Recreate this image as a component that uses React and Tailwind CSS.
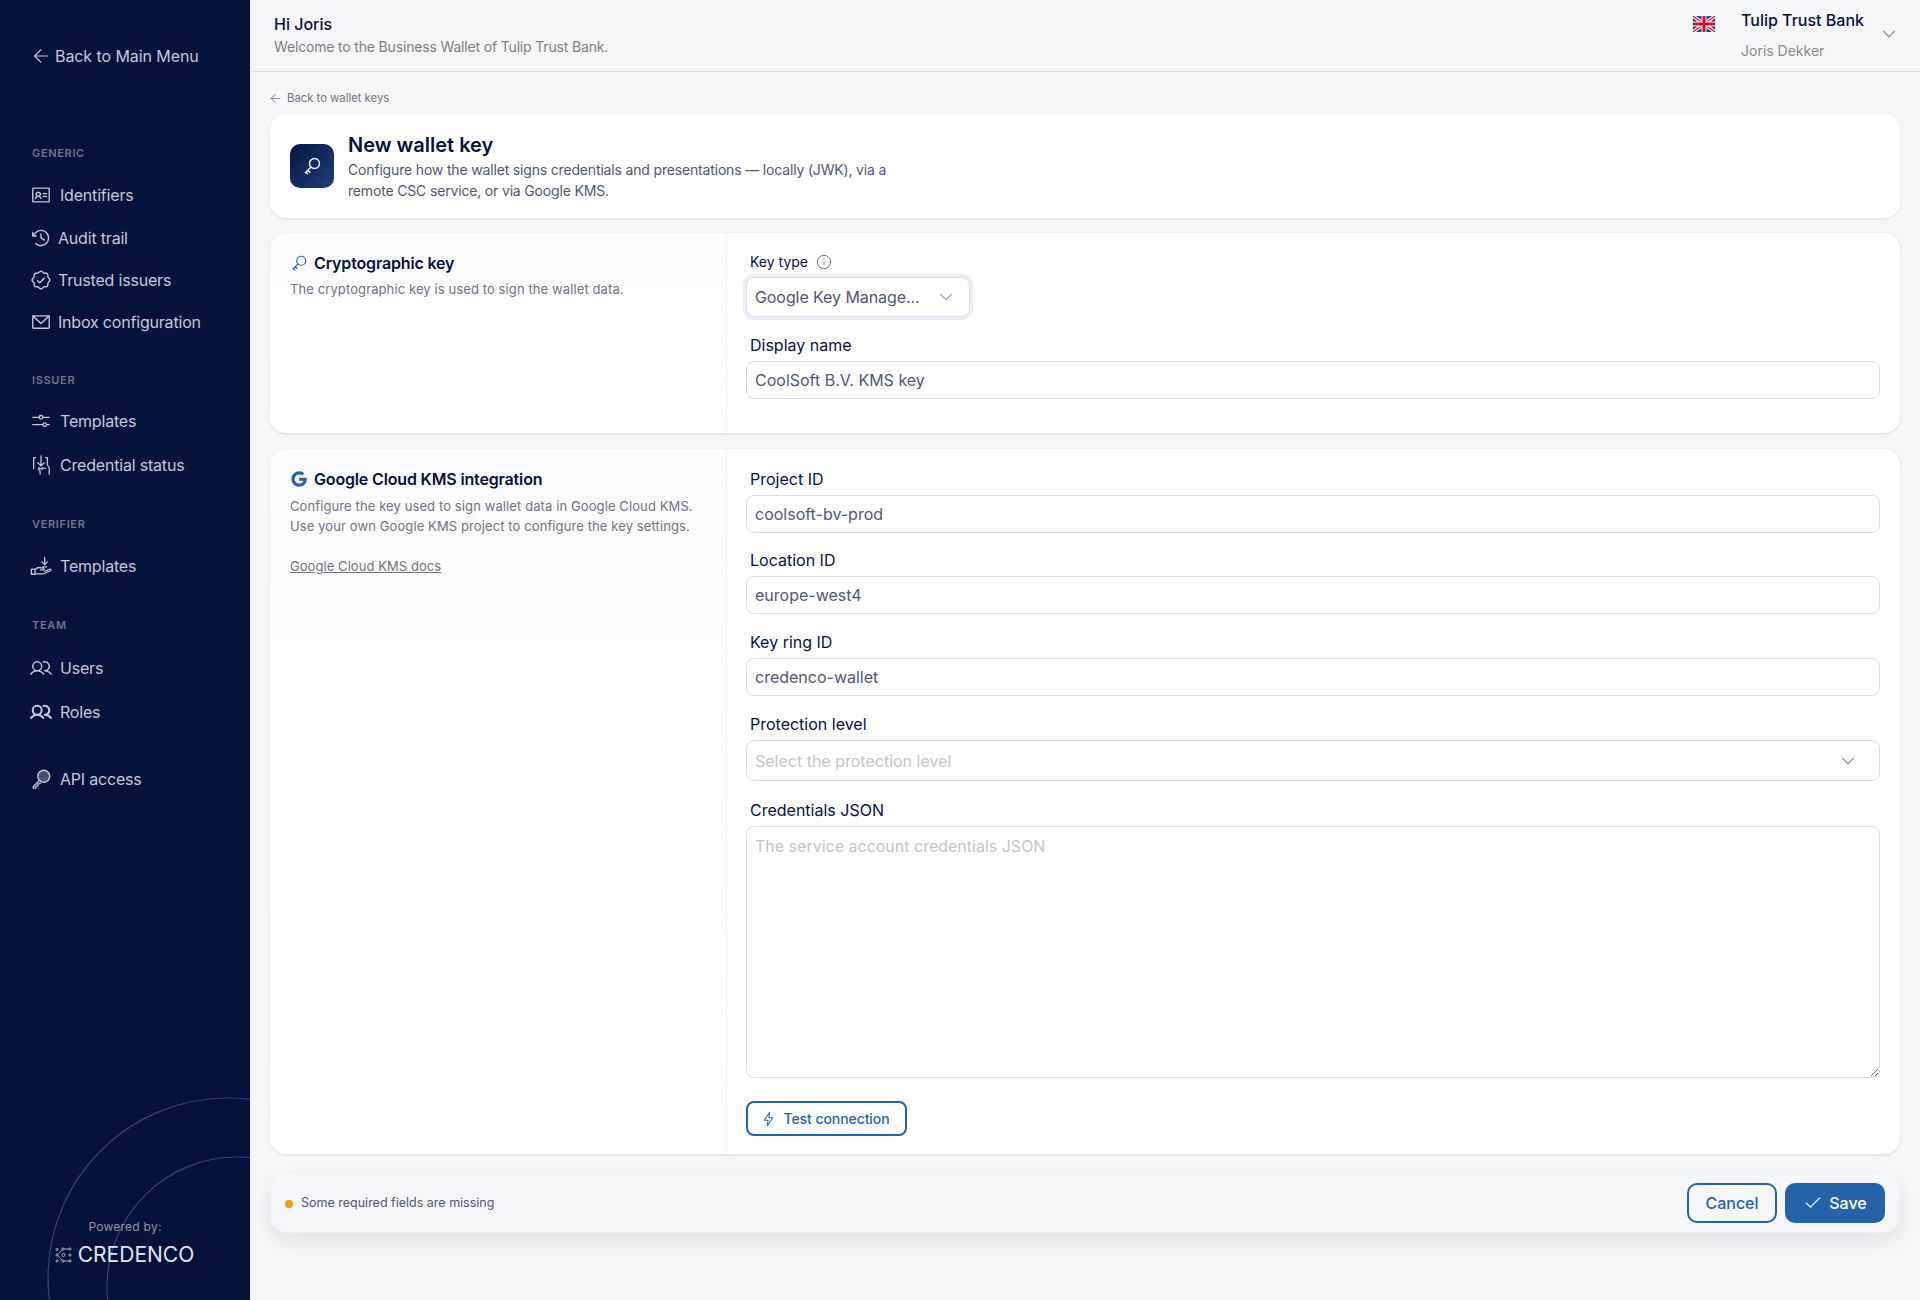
import { ArrowLeft, ChevronDown, Check, Info } from "lucide-react";
import {
  PiIdentificationCard,
  PiClockCounterClockwise,
  PiSealCheck,
  PiEnvelopeSimple,
  PiUsers,
  PiUsersBold,
} from "react-icons/pi";

const font = "font-['Inter','Liberation_Sans',sans-serif]";

function KeyGlyph({ className }) {
  return (
    <svg viewBox="0 0 24 24" fill="none" stroke="currentColor" strokeWidth="1.6" strokeLinecap="round" className={className}>
      <circle cx="15" cy="9" r="6" />
      <path d="M10.8 13.2 4 20M7 17l2.5 2.5M4.6 19.4l2 2" />
    </svg>
  );
}

function SlidersIcon({ className }) {
  return (
    <svg viewBox="0 0 24 24" fill="none" stroke="currentColor" strokeWidth="1.4" strokeLinecap="round" className={className}>
      <path d="M3 8h7M14 8h7M3 16h11M18 16h3" />
      <circle cx="12" cy="8" r="2" />
      <circle cx="16" cy="16" r="2" />
    </svg>
  );
}

function CredentialStatusIcon({ className }) {
  return (
    <svg viewBox="0 0 24 24" fill="none" stroke="currentColor" strokeWidth="1.4" strokeLinecap="round" strokeLinejoin="round" className={className}>
      <path d="M4 16V4h2M12 2v11M8.500 9.500 12 13l3.500-3.500" />
      <path d="M17 4h2v8l2 3v7M11 22v-3l-2-3 1-1 3 2 1-2 3 1" />
    </svg>
  );
}

function HandIcon({ className }) {
  return (
    <svg viewBox="0 0 24 24" fill="none" stroke="currentColor" strokeWidth="1.4" strokeLinecap="round" strokeLinejoin="round" className={className}>
      <path d="M1.500 15.500h4v5.500h-4zM5.500 16c2-2 4-3 6-2h3c1.300 0 1.300 2.300 0 2.300h-3M5.500 20.500h9.500l7.200-3.300c1.200-.8.300-2.300-1-1.700l-5.200 2.300" />
      <path d="M16 2.500V10M13 7.500l3 3 3-3M14 13h4" />
    </svg>
  );
}

function ApiKeyIcon({ className }) {
  return (
    <svg viewBox="0 0 24 24" fill="none" stroke="currentColor" strokeWidth="1.5" strokeLinecap="round" strokeLinejoin="round" className={className}>
      <circle cx="15" cy="9" r="6.500" fill="currentColor" fillOpacity="0.35" />
      <path d="M10.300 13.700 3.500 20.500v1.500h2.500l.5-2 2-.5.500-2 2.500-1" />
    </svg>
  );
}

function BoltIcon({ className }) {
  return (
    <svg viewBox="0 0 14 20" fill="none" stroke="currentColor" strokeWidth="1.300" strokeLinejoin="round" className={className}>
      <path d="M8.500 1.500 1.500 11.500h5l-1 7 7-10h-5z" />
    </svg>
  );
}

function UkFlag() {
  return (
    <svg viewBox="0 0 44 32" className="h-4 w-[22px]">
      <rect width="44" height="32" fill="#1f3a7a" />
      <path d="M0 0 44 32M44 0 0 32" stroke="#fff" strokeWidth="7" />
      <path d="M0 0 44 32M44 0 0 32" stroke="#c8102e" strokeWidth="2.500" />
      <path d="M22 0v32M0 16h44" stroke="#fff" strokeWidth="10" />
      <path d="M22 0v32M0 16h44" stroke="#c8102e" strokeWidth="6" />
    </svg>
  );
}

function GoogleG({ className }) {
  return (
    <svg viewBox="0 0 24 24" className={className} fill="currentColor">
      <path d="M12.200 10.200v4h5.600c-.7 2.400-2.800 3.900-5.600 3.900a6.100 6.100 0 1 1 4-10.700l3-3A10.300 10.300 0 0 0 12.200 1.700a10.300 10.300 0 1 0 0 20.600c6 0 10.200-4.200 10.200-10.200 0-.7-.1-1.300-.2-1.900z" />
    </svg>
  );
}

function CredencoLogo() {
  return (
    <svg viewBox="0 0 17 16" fill="none" stroke="currentColor" strokeWidth="0.7" className="h-4 w-[17px]">
      <circle cx="8.500" cy="8" r="1.500" />
      <circle cx="8" cy="2" r="1.100" />
      <circle cx="8" cy="14" r="1.100" />
      <circle cx="15" cy="2" r="1.100" />
      <circle cx="15" cy="14" r="1.100" />
      <circle cx="15" cy="8" r="1.100" />
      <circle cx="2" cy="8" r="1.100" />
      <circle cx="2" cy="14" r="1.100" />
      <circle cx="2" cy="2.500" r="1.100" />
      <path d="M9.100 2h4.800M9.100 14h4.800M3 7.300 7 2.800M3 8.700 7 13.200" />
    </svg>
  );
}

function NavItem({ icon: Icon, label, gap = "gap-2", className = "" }) {
  return (
    <div className={`flex h-6 items-center text-base tracking-[-0.012em] text-[#c4c9d8] ${gap} ${className}`}>
      <Icon className="-ml-[2px] h-[22px] w-[22px] shrink-0" />
      <span>{label}</span>
    </div>
  );
}

function SectionLabel({ children, className = "" }) {
  return <div className={`text-[11px] leading-4 font-semibold tracking-[0.06em] text-[#6d7590] ${className}`}>{children}</div>;
}

function Sidebar() {
  return (
    <aside className="relative h-[1300px] w-[250px] shrink-0 overflow-hidden bg-[#04123c] pl-8">
      <svg viewBox="0 0 250 1300" fill="none" className="pointer-events-none absolute top-0 left-0 h-[1300px] w-[250px]">
        <circle cx="228" cy="1278" r="180" stroke="#2a4a80" strokeWidth="1.200" />
        <circle cx="237" cy="1287" r="130" stroke="#2a4a80" strokeWidth="1.200" />
      </svg>
      <div className="flex h-6 translate-y-11 items-center gap-[3px] text-base tracking-[-0.005em] text-[#c4c9d8]">
        <ArrowLeft className="-ml-[2px] h-[22px] w-[22px]" strokeWidth={1.300} />
        <span>Back to Main Menu</span>
      </div>
      <div className="pt-[121px]">
        <SectionLabel>GENERIC</SectionLabel>
        <NavItem icon={PiIdentificationCard} label="Identifiers" className="mt-[22px]" />
        <NavItem icon={PiClockCounterClockwise} label="Audit trail" gap="gap-[6px]" className="mt-[19px]" />
        <NavItem icon={PiSealCheck} label="Trusted issuers" gap="gap-[6px]" className="mt-[18px]" />
        <NavItem icon={PiEnvelopeSimple} label="Inbox configuration" gap="gap-[6px]" className="mt-[18px]" />
        <SectionLabel className="mt-[38px]">ISSUER</SectionLabel>
        <NavItem icon={SlidersIcon} label="Templates" className="mt-[21px]" />
        <NavItem icon={CredentialStatusIcon} label="Credential status" className="mt-5" />
        <SectionLabel className="mt-[39px]">VERIFIER</SectionLabel>
        <NavItem icon={HandIcon} label="Templates" className="mt-[22px]" />
        <SectionLabel className="mt-[39px]">TEAM</SectionLabel>
        <NavItem icon={PiUsers} label="Users" className="mt-[23px]" />
        <NavItem icon={PiUsersBold} label="Roles" className="mt-5" />
        <NavItem icon={ApiKeyIcon} label="API access" className="mt-[43px]" />
      </div>
      <div className="absolute right-0 bottom-[33px] left-0">
        <div className="-translate-y-[1px] text-center text-xs tracking-[0.02em] text-[#8e94a8]">Powered by:</div>
        <div className="mt-[7px] flex items-center justify-center gap-[6px] pr-[1px] text-[21px] leading-6 text-[#e3e5ea]">
          <CredencoLogo />
          <span>CREDENCO</span>
        </div>
      </div>
    </aside>
  );
}

function Topbar() {
  return (
    <header className="flex h-[72px] items-start justify-between border-b border-[#dfe1e8] pl-[24px]">
      <div className="pt-3">
        <div className="text-base leading-6 font-medium text-[#04123c]">Hi Joris</div>
        <div className="text-sm leading-[21px] tracking-[-0.012em] text-[#7a7f8c]">Welcome to the Business Wallet of Tulip Trust Bank.</div>
      </div>
      <div className="flex items-start">
        <div className="mt-4 mr-[26px]">
          <UkFlag />
        </div>
        <div className="w-[137px] pt-[10px]">
          <div className="text-base leading-5 font-medium text-[#04123c]">Tulip Trust Bank</div>
          <div className="mt-[11px] text-sm leading-5 text-[#878b96]">Joris Dekker</div>
        </div>
        <ChevronDown className="mt-[23px] mr-[20px] h-[22px] w-[22px] text-[#8b8f9a]" strokeWidth={1.300} />
      </div>
    </header>
  );
}

function Field({ label, value, className = "" }) {
  return (
    <div className={className}>
      <div className="pl-1 text-base leading-5 text-[#04123c]">{label}</div>
      <div className="mt-[6px] flex h-[38px] items-center rounded-lg border border-[#dcdee3] bg-white px-2 text-base text-[#4e5972]">
        {value}
      </div>
    </div>
  );
}

function Panel({ left, children, className = "" }) {
  return (
    <section className={`flex overflow-hidden rounded-2xl bg-white shadow-[0_1px_3px_rgba(20,30,70,0.12)] ${className}`}>
      <div className="w-[457px] shrink-0 border-r border-[#eef0f4] bg-linear-to-b from-[#fafbfe] to-white px-5 pt-[20px]">{left}</div>
      <div className="flex-1 pr-5 pl-[19px]">{children}</div>
    </section>
  );
}

function PanelTitle({ icon, children }) {
  return (
    <div className="flex h-5 items-center gap-[6px] text-base leading-5 font-semibold tracking-[-0.01em] text-[#04123c]">
      {icon}
      <span>{children}</span>
    </div>
  );
}

export default function App() {
  return (
    <div className={`flex h-[1300px] w-[1920px] overflow-hidden bg-[#f5f6fa] ${font}`}>
      <Sidebar />
      <main className="min-w-0 flex-1">
        <Topbar />
        <div className="pr-5 pl-[20px]">
          <div className="flex h-[42px] items-center gap-[4px] pt-[11px] text-[11.300px] text-[#6d7488]">
            <ArrowLeft className="-ml-[2px] h-[15px] w-[15px]" strokeWidth={1.300} />
            <span>Back to wallet keys</span>
          </div>

          <section className="flex h-[104px] items-center gap-[14px] rounded-2xl bg-white px-5 shadow-[0_1px_3px_rgba(20,30,70,0.1)]">
            <div className="flex h-11 w-11 shrink-0 items-center justify-center rounded-[10px] bg-linear-to-br from-[#071644] to-[#1e3f77]">
              <KeyGlyph className="h-5 w-5 text-white" />
            </div>
            <div className="w-[560px]">
              <h1 className="-mt-[1px] text-xl leading-7 font-semibold text-[#04123c]">New wallet key</h1>
              <p className="text-sm leading-[21px] tracking-[-0.012em] text-[#4e5972]">
                Configure how the wallet signs credentials and presentations — locally (JWK), via a remote CSC service, or via Google KMS.
              </p>
            </div>
          </section>

          <Panel
            className="mt-[15px] h-[200px]"
            left={
              <>
                <PanelTitle icon={<KeyGlyph className="h-[18px] w-[18px] text-[#2563a8]" />}>Cryptographic key</PanelTitle>
                <p className="mt-[6px] text-[13px] leading-5 tracking-[0.008em] text-[#6d7488]">The cryptographic key is used to sign the wallet data.</p>
              </>
            }
          >
            <div className="mt-[19px] flex h-5 items-center gap-2 pl-1 text-sm text-[#04123c]">
              Key type <Info className="h-4 w-4 text-[#4e5972]" strokeWidth={1.300} />
            </div>
            <div className="mt-[5px] flex h-10 w-[224px] items-center justify-between rounded-lg border border-[#dcdee3] bg-white pr-[12px] pl-2 text-base tracking-[-0.005em] text-[#4e5972] shadow-[0_0_0_3px_#e8eefa]">
              Google Key Manage...
              <ChevronDown className="h-[22px] w-[22px] text-[#a4a9b5]" strokeWidth={1.200} />
            </div>
            <Field label="Display name" value="CoolSoft B.V. KMS key" className="mt-[18px]" />
          </Panel>

          <Panel
            className="mt-4 h-[705px]"
            left={
              <>
                <PanelTitle icon={<GoogleG className="h-[18px] w-[18px] text-[#2563a8]" />}>Google Cloud KMS integration</PanelTitle>
                <p className="mt-[7px] text-[13px] leading-5 tracking-[0.008em] text-[#6d7488]">
                  Configure the key used to sign wallet data in Google Cloud KMS. Use your own Google KMS project to configure the key settings.
                </p>
                <a className="mt-5 block text-[13px] leading-5 tracking-[0.005em] text-[#6d7488] underline">Google Cloud KMS docs</a>
              </>
            }
          >
            <Field label="Project ID" value="coolsoft-bv-prod" className="mt-5" />
            <Field label="Location ID" value="europe-west4" className="mt-[17px]" />
            <Field label="Key ring ID" value="credenco-wallet" className="mt-[18px]" />
            <div className="mt-[18px] pl-1 text-base leading-5 text-[#04123c]">Protection level</div>
            <div className="mt-[6px] flex h-[41px] items-center justify-between rounded-lg border border-[#dcdee3] bg-white pr-[20px] pl-2 text-base text-[#c2c5cc]">
              Select the protection level
              <ChevronDown className="h-[22px] w-[22px] text-[#8b8f9a]" strokeWidth={1.200} />
            </div>
            <div className="mt-[19px] pl-1 text-base leading-5 text-[#04123c]">Credentials JSON</div>
            <textarea
              readOnly
              placeholder="The service account credentials JSON"
              className="mt-[6px] block h-[252px] w-full rounded-lg border border-[#dcdee3] bg-white px-2 py-[7px] text-base placeholder:text-[#c2c5cc]"
            />
            <button className="mt-[23px] flex h-[35px] w-[161px] items-center justify-center gap-[9px] rounded-lg border-2 border-[#2563a8] text-sm font-medium tracking-[-0.005em] text-[#2563a8]">
              <BoltIcon className="h-4 w-[11px]" />
              Test connection
            </button>
          </Panel>

          <div className="mt-[19px] flex h-[60px] items-center justify-between rounded-2xl border border-[#eef0f5] bg-[#f5f6fa] pr-[14px] pl-[14px] shadow-[0_8px_20px_rgba(20,30,70,0.08)]">
            <div className="flex items-center gap-2 pt-[1px] text-[12.500px] text-[#4e5972]">
              <span className="h-2 w-2 rounded-full bg-[#f59e0b]" />
              Some required fields are missing
            </div>
            <div className="flex gap-2">
              <button className="h-10 w-[90px] rounded-[10px] border-2 border-[#2563a8] text-base font-medium text-[#2563a8]">Cancel</button>
              <button className="flex h-10 w-[100px] items-center justify-center gap-[6px] rounded-[10px] bg-[#2563a8] text-base font-medium text-white">
                <Check className="h-5 w-5" strokeWidth={1.300} />
                Save
              </button>
            </div>
          </div>
        </div>
      </main>
    </div>
  );
}
